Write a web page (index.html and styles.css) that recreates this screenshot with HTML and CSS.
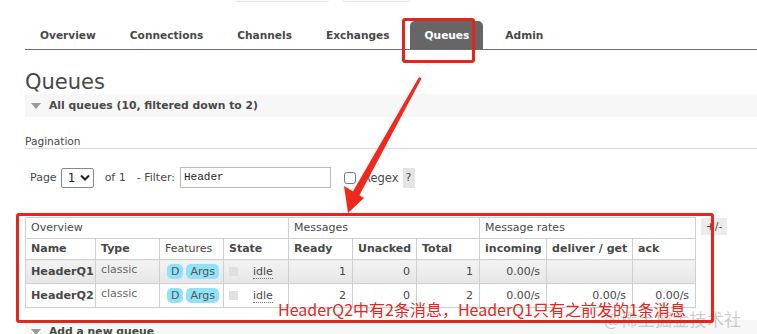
FILE: index.html
```html
<!DOCTYPE html>
<html>
<head>
<meta charset="utf-8">
<link rel="stylesheet" href="styles.css">
</head>
<body>
<div class="page">
  <div class="topbar"><span class="tb tb1"></span><span class="tb tb2"></span></div>
  <ul class="tabs">
    <li>Overview</li>
    <li>Connections</li>
    <li>Channels</li>
    <li>Exchanges</li>
    <li class="active">Queues</li>
    <li>Admin</li>
  </ul>
  <h1>Queues</h1>
  <div class="section-h"><span class="tri"></span>All queues (10, filtered down to 2)</div>
  <div class="pag-title">Pagination</div>
  <div class="filter">
    <span class="lbl">Page</span>
    <span class="select">1<svg width="10" height="7" viewBox="0 0 10 7"><path d="M1 1.5 L5 5.5 L9 1.5" fill="none" stroke="#222" stroke-width="2"/></svg></span>
    <span class="lbl of">of 1</span>
    <span class="lbl flt">- Filter:</span>
    <span class="input">Header</span>
    <span class="check"></span>
    <span class="lbl regex">Regex</span>
    <span class="help">?</span>
  </div>
  <div class="table-row">
    <table>
      <colgroup>
        <col class="c-name"><col class="c-type"><col class="c-feat"><col class="c-state">
        <col class="c-num"><col class="c-num"><col class="c-num2">
        <col class="c-inc"><col class="c-del"><col class="c-ack">
      </colgroup>
      <tr class="grp">
        <td colspan="4">Overview</td>
        <td colspan="3">Messages</td>
        <td colspan="3">Message rates</td>
      </tr>
      <tr class="hdr">
        <th>Name</th><th>Type</th><td>Features</td><th>State</th>
        <th>Ready</th><th>Unacked</th><th>Total</th>
        <th>incoming</th><th>deliver / get</th><th>ack</th>
      </tr>
      <tr class="row alt">
        <td class="qn">HeaderQ1</td><td class="ty">classic</td>
        <td><span class="badge">D</span><span class="badge">Args</span></td>
        <td><span class="st"></span><span class="idle">idle</span></td>
        <td class="n">1</td><td class="n">0</td><td class="n">1</td>
        <td class="n">0.00/s</td><td class="n"></td><td class="n"></td>
      </tr>
      <tr class="row">
        <td class="qn">HeaderQ2</td><td class="ty">classic</td>
        <td><span class="badge">D</span><span class="badge">Args</span></td>
        <td><span class="st"></span><span class="idle">idle</span></td>
        <td class="n">2</td><td class="n">0</td><td class="n">2</td>
        <td class="n">0.00/s</td><td class="n">0.00/s</td><td class="n">0.00/s</td>
      </tr>
    </table>
    <span class="plusminus">+/-</span>
  </div>
  <div class="section-h add"><span class="tri"></span>Add a new queue</div>
</div>

<div class="watermark">@稀土掘金技术社区</div>
<div class="note">HeaderQ2中有2条消息，HeaderQ1只有之前发的1条消息</div>
<div class="redbox box-tab"></div>
<div class="redbox box-table"></div>
<svg class="arrow" width="757" height="334" viewBox="0 0 757 334">
  <polygon points="419,77 421.5,78.5 359,196 352,193" fill="#ee2a1f"/>
  <polygon points="348,213 344,186 364,198" fill="#ee2a1f"/>
</svg>
</body>
</html>
```

FILE: styles.css
```css
html, body {
  margin: 0;
  padding: 0;
  background: #fff;
}
body {
  position: relative;
  width: 757px;
  height: 334px;
  overflow: hidden;
  font-family: "DejaVu Sans", Verdana, sans-serif;
  font-size: 11px;
  color: #484848;
}
.page {
  padding-left: 25px;
}
.topbar {
  height: 2px;
  display: flex;
  margin-top: -1px;
}
.tb {
  display: block;
  height: 2px;
  border-bottom: 1px solid #e6e6e6;
  border-radius: 0 0 4px 4px;
  background: #fafafa;
}
.tb1 { margin-left: 210px; width: 94px; }
.tb2 { margin-left: 13px; width: 69px; }

.tabs {
  list-style: none;
  margin: 20px 0 0 0;
  padding: 0 0 0 1px;
  display: flex;
  height: 28px;
  border-bottom: 1px solid #6d6d6d;
}
.tabs li {
  font-weight: bold;
  font-size: 10.6px;
  color: #484848;
  line-height: 29px;
  padding: 0 14px;
  margin-right: 6px;
}
.tabs li.active {
  background: #666;
  color: #fff;
  border-radius: 5px 5px 0 0;
  margin-right: 8px;
  padding: 0 14px 0 15px;
}

h1 {
  margin: 20px 0 0 0;
  font-size: 21px;
  line-height: 24px;
  font-weight: normal;
  color: #484848;
}

.section-h {
  margin-top: 0;
  height: 23px;
  background: #f7f7f7;
  display: flex;
  align-items: center;
  font-weight: bold;
  font-size: 10.8px;
  color: #484848;
}
.tri {
  display: inline-block;
  width: 0;
  height: 0;
  border-left: 5px solid transparent;
  border-right: 5px solid transparent;
  border-top: 6px solid #999;
  margin: 1px 8px 0 6px;
}

.pag-title {
  margin-top: 17px;
  line-height: 14px;
  font-size: 10.6px;
  padding-bottom: 0;
  border-bottom: 1px solid #dedede;
}

.filter {
  margin-top: 18px;
  display: flex;
  align-items: center;
  height: 21px;
  padding-left: 5px;
  font-size: 11px;
}
.lbl { color: #484848; }
.select {
  margin-left: 4px;
  width: 33px;
  height: 20px;
  border: 1px solid #888;
  border-radius: 2px;
  box-sizing: border-box;
  display: flex;
  align-items: center;
  justify-content: space-between;
  padding: 0 3px 0 6px;
  font-size: 12px;
  color: #222;
}
.of { margin-left: 11px; }
.flt { margin-left: 11px; }
.input {
  margin-left: 5px;
  width: 151px;
  height: 21px;
  box-sizing: border-box;
  border: 1px solid #bbb;
  font-family: "Liberation Mono", "DejaVu Sans Mono", monospace;
  font-size: 11px;
  color: #222;
  padding: 0 3px;
  line-height: 19px;
}
.check {
  margin-left: 13px;
  width: 12px;
  height: 12px;
  border: 1px solid #777;
  border-radius: 3px;
  box-sizing: border-box;
}
.regex { margin-left: 7px; font-size: 11.5px; }
.help {
  margin-left: 4px;
  width: 12px;
  height: 20px;
  background: #e4e4e4;
  text-align: center;
  line-height: 20px;
  font-size: 11px;
}

.table-row {
  margin-top: 29px;
  display: flex;
  align-items: flex-start;
}
table {
  border-collapse: collapse;
  table-layout: fixed;
  width: 671px;
}
col.c-name { width: 70px; }
col.c-type { width: 64px; }
col.c-feat { width: 64px; }
col.c-state { width: 65px; }
col.c-num { width: 64px; }
col.c-num2 { width: 63px; }
col.c-inc { width: 67px; }
col.c-del { width: 86px; }
col.c-ack { width: 63px; }
td, th {
  border: 1px solid #cfcfcf;
  padding: 0 5px;
  font-size: 11px;
  line-height: 14px;
  color: #484848;
  text-align: left;
  white-space: nowrap;
  overflow: hidden;
}
th { font-weight: bold; }
tr.grp td { height: 20px; font-weight: normal; }
tr.hdr th, tr.hdr td { height: 20px; }
tr.row td { height: 23px; }
tr.row td.ty { height: 20px; padding-bottom: 3px; color: #666; }
tr.alt td {
  background: linear-gradient(#f3f3f3, #e6e6e6);
}
td.qn { font-weight: bold; font-size: 11.2px; }
td.n { text-align: right; padding-right: 6px; }
.badge {
  display: inline-block;
  background: #90e2f8;
  color: #555;
  border-radius: 5px;
  padding: 0 4px;
  height: 15px;
  line-height: 15px;
  margin: 0 1px 0 2px;
  font-size: 11px;
  vertical-align: middle;
}
.st {
  display: inline-block;
  width: 9px;
  height: 9px;
  background: #e0e0e0;
  vertical-align: middle;
  margin: 0 15px 0 0;
}
.idle {
  border-bottom: 1px dotted #777;
  vertical-align: middle;
}
.plusminus {
  margin-left: 5px;
  margin-top: 1px;
  width: 26px;
  height: 17px;
  background: #ececec;
  font-size: 11px;
  line-height: 17px;
  text-align: center;
}

.section-h.add {
  margin-top: 12px;
}

.watermark {
  position: absolute;
  left: 604px;
  top: 308px;
  font-family: "Noto Sans CJK SC", sans-serif;
  font-size: 17px;
  line-height: 22px;
  color: rgba(160, 160, 160, 0.55);
  letter-spacing: 0.3px;
}
.note {
  position: absolute;
  left: 278px;
  top: 298px;
  font-family: "Noto Sans CJK SC", sans-serif;
  font-size: 16px;
  line-height: 22px;
  color: #e8251d;
  white-space: nowrap;
}
.redbox {
  position: absolute;
  border: 3px solid #e8231b;
  border-radius: 3px;
  box-sizing: border-box;
}
.box-tab { left: 402px; top: 18px; width: 73px; height: 45px; }
.box-table { left: 16px; top: 213px; width: 698px; height: 110px; }
.arrow {
  position: absolute;
  left: 0;
  top: 0;
}
```
